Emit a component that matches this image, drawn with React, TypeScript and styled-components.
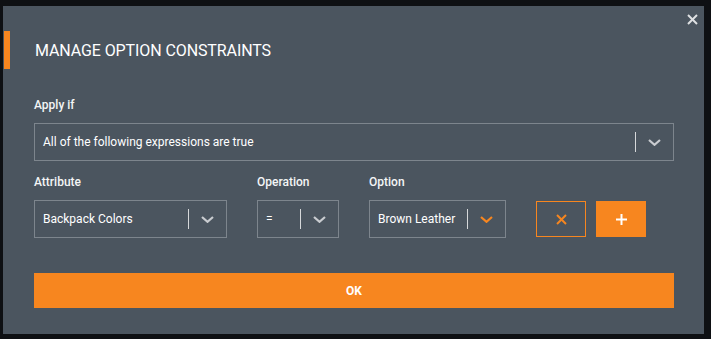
import styled, { createGlobalStyle } from "styled-components";

const GlobalStyle = createGlobalStyle`
  html, body {
    margin: 0;
    padding: 0;
    background: #0e1013;
  }
  body {
    font-family: Roboto, "Liberation Sans", sans-serif;
  }
`;

const orange = "#f7861f";

const Page = styled.div`
  width: 711px;
  height: 339px;
  padding: 6px 7px 5px 3px;
  box-sizing: border-box;
`;

const Dialog = styled.div`
  position: relative;
  height: 100%;
  background: #4b555f;
  padding: 25px 30px 26px 31px;
  box-sizing: border-box;
  display: flex;
  flex-direction: column;
`;

const CloseButton = styled.button`
  position: absolute;
  top: 6px;
  right: 5px;
  width: 14px;
  height: 14px;
  padding: 0;
  border: none;
  background: none;
  display: flex;
  align-items: center;
  justify-content: center;
  cursor: pointer;
`;

const Header = styled.div`
  height: 38px;
  margin-left: -30px;
  border-left: 6px solid ${orange};
  padding-left: 25px;
  display: flex;
  align-items: center;
`;

const Title = styled.h2`
  margin: 0;
  font-size: 16px;
  font-weight: 400;
  color: #ffffff;
  letter-spacing: -0.1px;
`;

const Section = styled.div`
  margin-top: 28px;
  display: flex;
  flex-direction: column;
  gap: 13px;
`;

const Row = styled.div`
  display: flex;
  align-items: flex-end;
  gap: 30px;
`;

const Field = styled.div<{ width?: number }>`
  display: flex;
  flex-direction: column;
  width: ${(p) => (p.width ? `${p.width}px` : "100%")};
`;

const Label = styled.label`
  font-size: 12px;
  line-height: 16px;
  font-weight: 500;
  color: #f4f5f6;
  margin-bottom: 10px;
`;

const Select = styled.div`
  height: 38px;
  border: 1px solid #7d858d;
  box-sizing: border-box;
  display: flex;
  align-items: center;
`;

const Value = styled.span`
  flex: 1;
  padding-left: 8px;
  font-size: 12px;
  color: #ffffff;
  white-space: nowrap;
  overflow: hidden;
`;

const Divider = styled.span`
  width: 1px;
  height: 20px;
  background: #d6d8da;
`;

const Toggle = styled.span`
  width: 37px;
  display: flex;
  align-items: center;
  justify-content: center;
`;

const Actions = styled.div`
  display: flex;
  gap: 10px;
  margin-bottom: 1px;
`;

const IconButton = styled.button<{ filled?: boolean }>`
  width: 50px;
  height: 36px;
  box-sizing: border-box;
  border: 1px solid ${orange};
  background: ${(p) => (p.filled ? orange : "transparent")};
  display: flex;
  align-items: center;
  justify-content: center;
  padding: 0;
  cursor: pointer;
`;

const OkButton = styled.button`
  margin-top: 35px;
  height: 35px;
  width: 100%;
  border: none;
  background: ${orange};
  color: #ffffff;
  font-family: Roboto, "Liberation Sans", sans-serif;
  font-size: 12px;
  font-weight: 700;
  cursor: pointer;
`;

function Chevron({ color = "#c9ccd0" }: { color?: string }) {
  return (
    <svg width="13" height="7" viewBox="0 0 13 7">
      <polyline points="1,1 6.5,5.8 12,1" fill="none" stroke={color} strokeWidth="2.2" />
    </svg>
  );
}

function Cross({ size, color, width = 2 }: { size: number; color: string; width?: number }) {
  return (
    <svg width={size} height={size} viewBox={`0 0 ${size} ${size}`}>
      <line x1="1" y1="1" x2={size - 1} y2={size - 1} stroke={color} strokeWidth={width} />
      <line x1={size - 1} y1="1" x2="1" y2={size - 1} stroke={color} strokeWidth={width} />
    </svg>
  );
}

function Plus() {
  return (
    <svg width="11" height="11" viewBox="0 0 11 11">
      <line x1="0" y1="5.5" x2="11" y2="5.5" stroke="#fff" strokeWidth="2" />
      <line x1="5.5" y1="0" x2="5.5" y2="11" stroke="#fff" strokeWidth="2" />
    </svg>
  );
}

function Dropdown({ value, accent }: { value: string; accent?: boolean }) {
  return (
    <Select>
      <Value>{value}</Value>
      <Divider />
      <Toggle>
        <Chevron color={accent ? orange : undefined} />
      </Toggle>
    </Select>
  );
}

export default function App() {
  return (
    <>
      <GlobalStyle />
      <Page>
        <Dialog>
          <CloseButton>
            <Cross size={11} color="#dfe1e3" />
          </CloseButton>
          <Header>
            <Title>MANAGE OPTION CONSTRAINTS</Title>
          </Header>
          <Section>
            <Field>
              <Label>Apply if</Label>
              <Dropdown value="All of the following expressions are true" />
            </Field>
            <Row>
              <Field width={193}>
                <Label>Attribute</Label>
                <Dropdown value="Backpack Colors" />
              </Field>
              <Field width={82}>
                <Label>Operation</Label>
                <Dropdown value="=" />
              </Field>
              <Field width={137}>
                <Label>Option</Label>
                <Dropdown value="Brown Leather" accent />
              </Field>
              <Actions>
                <IconButton>
                  <Cross size={11} color={orange} />
                </IconButton>
                <IconButton filled>
                  <Plus />
                </IconButton>
              </Actions>
            </Row>
          </Section>
          <OkButton>OK</OkButton>
        </Dialog>
      </Page>
    </>
  );
}
